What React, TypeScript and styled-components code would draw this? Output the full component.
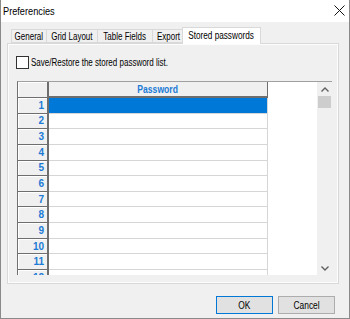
import React from 'react';
import styled, { createGlobalStyle } from 'styled-components';

const GlobalStyle = createGlobalStyle`
  html, body { margin: 0; padding: 0; background: #f0f0f0; }
  body {
    font-family: "Liberation Sans", Arial, sans-serif;
    font-size: 10px;
    color: #000;
  }
  * { box-sizing: border-box; }
`;

// the dialog font is narrower than Arial, so squeeze text horizontally
const Narrow = styled.span<{ $scale?: number; $origin?: string }>`
  display: inline-block;
  white-space: nowrap;
  transform: scaleX(${(p) => p.$scale ?? 0.8});
  transform-origin: ${(p) => p.$origin ?? 'center'};
`;

const Window = styled.div`
  width: 350px;
  height: 319px;
  border: 1px solid #8a8a8a;
  border-top: none;
  display: flex;
  flex-direction: column;
  background: #f0f0f0;
  overflow: hidden;
`;

const TitleBar = styled.div`
  height: 22px;
  background: #fff;
  display: flex;
  align-items: center;
  justify-content: space-between;
  padding: 0 4px 1px 2px;
  font-size: 11.5px;
`;

const Body = styled.div`
  flex: 1;
  display: flex;
  flex-direction: column;
  padding: 5px 10px 0 6px;
`;

const TabStrip = styled.div`
  height: 16px;
  display: flex;
  align-items: flex-end;
  padding-left: 4px;
  position: relative;
  z-index: 1;
`;

const Tab = styled.div<{ $w: number; $active?: boolean }>`
  width: ${(p) => p.$w}px;
  height: ${(p) => (p.$active ? 17 : 14)}px;
  margin-left: ${(p) => (p.$active ? -2 : 0)}px;
  margin-right: ${(p) => (p.$active ? -2 : -1)}px;
  margin-bottom: ${(p) => (p.$active ? -1 : 0)}px;
  border: 1px solid #d9d9d9;
  border-bottom: ${(p) => (p.$active ? 'none' : '1px solid #d9d9d9')};
  background: ${(p) => (p.$active ? '#fff' : '#f0f0f0')};
  display: flex;
  align-items: center;
  justify-content: center;
  overflow: visible;
  padding-bottom: ${(p) => (p.$active ? 2 : 0)}px;
`;

const Pane = styled.div`
  height: 241px;
  border: 1px solid #d9d9d9;
  background: #fcfcfc;
  padding: 1px;
`;

const PaneInner = styled.div`
  height: 100%;
  background: #f0f0f0;
  padding: 11px 5px 0 7px;
  display: flex;
  flex-direction: column;
`;

const CheckRow = styled.label`
  display: flex;
  align-items: center;
  gap: 2px;
  height: 13px;
`;

const CheckBox = styled.span`
  width: 13px;
  height: 13px;
  flex: none;
  border: 1px solid #333;
  background: #fff;
`;

const GridFrame = styled.div`
  margin-top: 12px;
  margin-left: 1px;
  height: 194px;
  border-top: 1px solid #a0a0a0;
  border-left: 1px solid #707070;
  display: flex;
  overflow: hidden;
`;

const Table = styled.div`
  display: grid;
  grid-template-columns: 31px 219px;
  grid-template-rows: 16px;
  grid-auto-rows: 15.65px;
  align-content: start;
`;

const RowHead = styled.div`
  background: #f0f0f0;
  border-bottom: 1px solid #6e6e6e;
  border-right: 2px solid #6e6e6e;
  box-shadow: inset 1px 1px 0 #fff;
  color: #1a7ad6;
  font-weight: bold;
  font-size: 10px;
  display: flex;
  align-items: center;
  justify-content: flex-end;
  padding-right: 3px;
`;

const ColHead = styled.div`
  background: #f0f0f0;
  border-bottom: 2px solid #6e6e6e;
  border-right: 1px solid #6e6e6e;
  color: #1a7ad6;
  font-weight: bold;
  display: flex;
  align-items: center;
  justify-content: center;
`;

const Cell = styled.div<{ $selected?: boolean }>`
  background: ${(p) => (p.$selected ? '#0078d7' : '#fff')};
  border-bottom: 1px solid #d6d6d6;
  border-right: 1px solid #d6d6d6;
`;

const Blank = styled.div`
  flex: 1;
  background: #fff;
`;

const ScrollBar = styled.div`
  width: 15px;
  background: #f0f0f0;
  display: flex;
  flex-direction: column;
  align-items: center;
  padding: 0 1px;
`;

const Arrow = styled.div`
  width: 13px;
  height: 14px;
  display: flex;
  align-items: center;
  justify-content: center;
`;

const Thumb = styled.div`
  width: 13px;
  height: 12px;
  background: #cdcdcd;
`;

const Track = styled.div`
  flex: 1;
`;

const Footer = styled.div`
  display: flex;
  justify-content: flex-end;
  gap: 5px;
  padding: 12px 4px 0 0;
`;

const Button = styled.button<{ $default?: boolean }>`
  width: 57px;
  height: 18px;
  background: #e1e1e1;
  border: 1px solid ${(p) => (p.$default ? '#0078d7' : '#adadad')};
  font-family: "Liberation Sans", Arial, sans-serif;
  font-size: 10px;
  color: #000;
  padding: 0;
  border-radius: 0;
  display: flex;
  align-items: center;
  justify-content: center;
`;

const tabs = [
  { label: 'General', w: 36 },
  { label: 'Grid Layout', w: 52 },
  { label: 'Table Fields', w: 56 },
  { label: 'Export', w: 33 },
];

const rows = Array.from({ length: 12 }, (_, i) => i + 1);

export default function App() {
  return (
    <>
      <GlobalStyle />
      <Window>
        <TitleBar>
          <Narrow $scale={0.8} $origin="left">Preferencies</Narrow>
          <svg width="11" height="11" viewBox="0 0 11 11">
            <path d="M0.5 0.5 L10.5 10.5 M10.5 0.5 L0.5 10.5" stroke="#111" strokeWidth="1" />
          </svg>
        </TitleBar>
        <Body>
          <TabStrip>
            {tabs.map((t) => (
              <Tab key={t.label} $w={t.w}>
                <Narrow>{t.label}</Narrow>
              </Tab>
            ))}
            <Tab $w={79} $active>
              <Narrow $scale={0.82}>Stored passwords</Narrow>
            </Tab>
          </TabStrip>
          <Pane>
            <PaneInner>
              <CheckRow>
                <CheckBox />
                <Narrow $origin="left">Save/Restore the stored password list.</Narrow>
              </CheckRow>
              <GridFrame>
                <Table>
                  <RowHead />
                  <ColHead>
                    <Narrow $scale={0.86}>Password</Narrow>
                  </ColHead>
                  {rows.map((n) => (
                    <React.Fragment key={n}>
                      <RowHead>{n}</RowHead>
                      <Cell $selected={n === 1} />
                    </React.Fragment>
                  ))}
                </Table>
                <Blank />
                <ScrollBar>
                  <Arrow>
                    <svg width="8" height="5" viewBox="0 0 8 5">
                      <path d="M0.5 4.5 L4 1 L7.5 4.5" stroke="#606060" strokeWidth="1.4" fill="none" />
                    </svg>
                  </Arrow>
                  <Thumb />
                  <Track />
                  <Arrow>
                    <svg width="8" height="5" viewBox="0 0 8 5">
                      <path d="M0.5 0.5 L4 4 L7.5 0.5" stroke="#606060" strokeWidth="1.4" fill="none" />
                    </svg>
                  </Arrow>
                </ScrollBar>
              </GridFrame>
            </PaneInner>
          </Pane>
          <Footer>
            <Button $default>
              <Narrow $scale={0.84}>OK</Narrow>
            </Button>
            <Button>
              <Narrow $scale={0.84}>Cancel</Narrow>
            </Button>
          </Footer>
        </Body>
      </Window>
    </>
  );
}
